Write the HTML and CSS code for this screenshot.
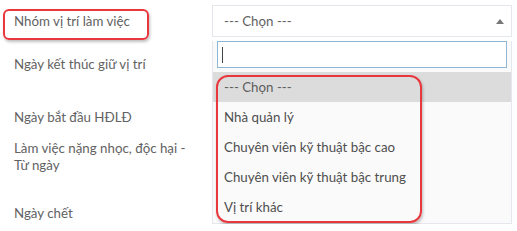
FILE: index.html
```html
<!DOCTYPE html>
<html lang="vi">
<head>
  <meta charset="UTF-8" />
  <title>Nhóm vị trí làm việc</title>
  <link rel="stylesheet" href="styles.css">
</head>
<body>
  <div class="form">
    <div class="labels">
      <div class="label label-mark">Nhóm vị trí làm việc</div>
      <div class="label label-2">Ngày kết thúc giữ vị trí</div>
      <div class="label label-3">Ngày bắt đầu HĐLĐ</div>
      <div class="label label-4">Làm việc nặng nhọc, độc hại -<br>Từ ngày</div>
      <div class="label label-5">Ngày chết</div>
    </div>

    <div class="select-wrap">
      <div class="select">
        <span class="select-text">--- Chọn ---</span>
        <span class="arrow"></span>
      </div>
      <div class="dropdown">
        <div class="search"><span class="caret"></span></div>
        <ul class="options">
          <li class="option active">--- Chọn ---</li>
          <li class="option">Nhà quản lý</li>
          <li class="option">Chuyên viên kỹ thuật bậc cao</li>
          <li class="option">Chuyên viên kỹ thuật bậc trung</li>
          <li class="option">Vị trí khác</li>
          <li class="options-mark"></li>
        </ul>
      </div>
    </div>
  </div>
</body>
</html>
```

FILE: styles.css
```css
body {
  margin: 0;
  padding: 0;
  background-color: #ffffff;
  font-family: Lato, "Open Sans", sans-serif;
  font-size: 13.3px;
  color: #626262;
}

.form {
  display: flex;
  padding-top: 5px;
}

.labels {
  width: 212px;
  margin-top: -5px;
  display: flex;
  flex-direction: column;
  align-items: flex-start;
}

.label {
  padding-left: 14px;
  line-height: 16px;
}

.label-mark {
  margin-left: 3px;
  margin-top: 9px;
  padding: 2px 17px 9px 9px;
  border: 2px solid #e8383d;
  border-radius: 6px;
  box-shadow: 1px 2px 3px rgba(0, 0, 0, 0.25);
}

.label-2 {
  margin-top: 16px;
}

.label-3 {
  margin-top: 37px;
}

.label-4 {
  margin-top: 15px;
  line-height: 17px;
}

.label-5 {
  margin-top: 31px;
}

.select-wrap {
  width: 300px;
}

.select {
  height: 32px;
  box-sizing: border-box;
  border: 1px solid #e4e7eb;
  display: flex;
  align-items: center;
  justify-content: space-between;
  padding: 0 6px 0 11px;
}

.select-text {
  color: #626262;
}

.arrow {
  width: 0;
  height: 0;
  border-left: 4px solid transparent;
  border-right: 4px solid transparent;
  border-bottom: 5px solid #777;
  margin-right: 1px;
}

.dropdown {
  border: 1px solid #e4e7eb;
  border-top: none;
  background-color: #fafafa;
}

.search {
  margin: 4px;
  height: 27px;
  box-sizing: border-box;
  border: 1px solid #8fb6d4;
  background: #fff;
  display: flex;
  align-items: center;
  padding-left: 4px;
}

.caret {
  width: 1px;
  height: 16px;
  background: #444;
}

.options {
  list-style: none;
  margin: 0;
  padding: 0 0 1px 0;
  position: relative;
}

.option {
  height: 30px;
  line-height: 30px;
  padding-left: 11px;
  color: #4e4e4e;
}

.option.active {
  background-color: #dcdcdc;
  color: #5e5e5e;
}

.options-mark {
  position: absolute;
  left: 3px;
  top: 3px;
  width: 206px;
  height: 148px;
  box-sizing: border-box;
  border: 2px solid #e8383d;
  border-radius: 12px;
  box-shadow: 1px 2px 3px rgba(0, 0, 0, 0.25);
}
```
